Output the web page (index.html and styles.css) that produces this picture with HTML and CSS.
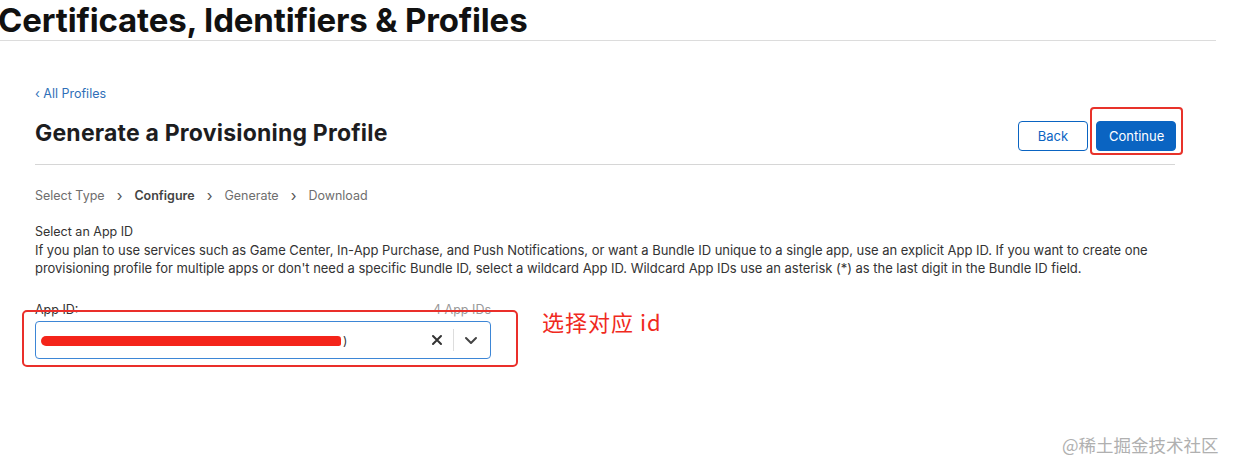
FILE: index.html
```html
<!DOCTYPE html>
<html>
<head>
<meta charset="utf-8">
<link rel="stylesheet" href="styles.css">
</head>
<body>
<header class="top">
  <h1 class="site-title">Certificates, Identifiers &amp; Profiles</h1>
</header>
<main class="main">
  <a class="back-link" href="#">&lsaquo; All Profiles</a>
  <div class="page-head">
    <h2 class="page-title">Generate a Provisioning Profile</h2>
    <div class="actions">
      <button class="btn btn-outline">Back</button>
      <div class="highlight-btn">
        <button class="btn btn-primary">Continue</button>
      </div>
    </div>
  </div>
  <nav class="steps">
    <span>Select Type</span><span class="sep">&rsaquo;</span>
    <span class="current">Configure</span><span class="sep">&rsaquo;</span>
    <span>Generate</span><span class="sep">&rsaquo;</span>
    <span>Download</span>
  </nav>
  <section class="section">
    <div class="section-title">Select an App ID</div>
    <p class="desc">If you plan to use services such as Game Center, In-App Purchase, and Push Notifications, or want a Bundle ID unique to a single app, use an explicit App ID. If you want to create one provisioning profile for multiple apps or don't need a specific Bundle ID, select a wildcard App ID. Wildcard App IDs use an asterisk (*) as the last digit in the Bundle ID field.</p>
  </section>
  <div class="field-row">
    <div class="field">
      <div class="field-label">
        <span>App ID:</span><span class="count">4 App IDs</span>
      </div>
      <div class="select">
        <div class="value"><span class="scribble"></span><span class="paren">)</span></div>
        <div class="controls">
          <svg class="clear" width="12" height="12" viewBox="0 0 12 12"><path d="M2 2L10 10M10 2L2 10" stroke="#333" stroke-width="2" stroke-linecap="round"/></svg>
          <span class="divider"></span>
          <svg class="chev" width="14" height="10" viewBox="0 0 14 10"><path d="M2 3L7 8L12 3" fill="none" stroke="#444" stroke-width="2" stroke-linecap="round" stroke-linejoin="round"/></svg>
        </div>
      </div>
      <div class="red-box"></div>
    </div>
    <div class="note">选择对应 id</div>
  </div>
</main>
<div class="watermark">@稀土掘金技术社区</div>
</body>
</html>
```
FILE: styles.css
```css
* { box-sizing: border-box; }
body {
  margin: 0;
  width: 1236px;
  height: 472px;
  overflow: hidden;
  background: #fff;
  font-family: Inter, "Noto Sans", "Noto Sans CJK SC", sans-serif;
  color: #1d1d1f;
  position: relative;
}
.top {
  width: 1216px;
  border-bottom: 1px solid #dcdcdc;
  height: 41px;
}
.site-title {
  margin: 0 0 0 -2px;
  font-size: 33px;
  line-height: 40px;
  font-weight: 700;
  letter-spacing: -0.15px;
  color: #111;
  white-space: nowrap;
}
.main {
  margin-left: 35px;
  width: 1140px;
  padding-top: 45px;
}
.back-link {
  display: block;
  font-size: 12.5px;
  line-height: 16px;
  color: #2f6fb8;
  text-decoration: none;
}
.page-head {
  display: flex;
  justify-content: space-between;
  align-items: center;
  height: 63px;
  border-bottom: 1px solid #d6d6d6;
}
.page-title {
  margin: 0;
  font-size: 23px;
  line-height: 30px;
  font-weight: 700;
  color: #1d1d1f;
  letter-spacing: 0.2px;
}
.actions {
  display: flex;
  align-items: flex-start;
  gap: 2px;
  margin-bottom: 4px;
}
.btn {
  font-family: Inter, sans-serif;
  font-size: 13px;
  height: 30px;
  border-radius: 4px;
  padding: 0 12px;
  cursor: pointer;
}
.btn-outline {
  width: 70px;
  margin-top: 14px;
  background: #fff;
  color: #0a64c2;
  border: 1px solid #0a64c2;
}
.btn-primary {
  width: 80px;
  background: #0a64c2;
  color: #fff;
  border: 1px solid #0a64c2;
}
.highlight-btn {
  border: 2px solid #e8322a;
  border-radius: 4px;
  padding: 12px 5px 2px 4px;
  margin-right: -8px;
}
.steps {
  display: flex;
  align-items: center;
  margin-top: 22px;
  font-size: 12.5px;
  color: #6e6e6e;
  line-height: 18px;
}
.steps .current { font-weight: 600; color: #444; }
.steps .sep { margin: 0 12px; font-size: 15px; color: #555; }
.section { margin-top: 18px; }
.section-title {
  font-size: 12.5px;
  line-height: 18px;
  color: #333;
}
.desc {
  margin: 0;
  font-size: 13px;
  line-height: 18px;
  color: #333;
  letter-spacing: -0.03px;
}
.field-row {
  display: flex;
  align-items: flex-start;
  margin-top: 26px;
}
.field {
  width: 456px;
  position: relative;
}
.field-label {
  display: flex;
  justify-content: space-between;
  font-size: 12.5px;
  line-height: 14px;
  color: #333;
}
.field-label .count { color: #999; }
.select {
  margin-top: 4px;
  height: 38px;
  border: 1.5px solid #3d86d6;
  border-radius: 4px;
  display: flex;
  align-items: center;
  justify-content: space-between;
  padding: 0 12px 0 5px;
}
.value { display: flex; align-items: center; }
.scribble {
  display: block;
  width: 300px;
  height: 10px;
  background: #f4241a;
  border-radius: 6px 4px 3px 6px;
  margin-top: 2px;
}
.paren { font-size: 12px; color: #333; margin-left: 2px; }
.controls { display: flex; align-items: center; gap: 10px; }
.divider { width: 1px; height: 22px; background: #ddd; }
.red-box {
  position: absolute;
  left: -13px;
  top: 7px;
  width: 496px;
  height: 57px;
  border: 2px solid #ea2f2a;
  border-radius: 5px;
  pointer-events: none;
}
.note {
  margin-left: 51px;
  margin-top: 5px;
  font-size: 22px;
  line-height: 26px;
  letter-spacing: 1px;
  color: #f02a1e;
  font-family: "Noto Sans CJK SC", sans-serif;
}
.watermark {
  position: absolute;
  left: 1062px;
  top: 432px;
  font-size: 17.5px;
  color: #b0b0b0;
  font-family: "Noto Sans CJK SC", sans-serif;
}
```
